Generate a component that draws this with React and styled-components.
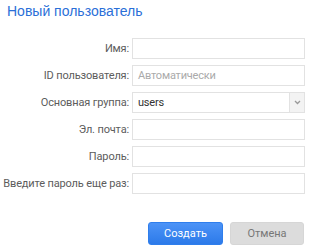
import React from "react";
import styled, { createGlobalStyle } from "styled-components";

const Global = createGlobalStyle`
  body {
    margin: 0;
    background: #fff;
    font-family: Roboto, "Liberation Sans", Arial, sans-serif;
  }
`;

const Dialog = styled.div`
  width: 312px;
  height: 252px;
  box-sizing: border-box;
  padding: 2px 7px 0 3px;
`;

const Title = styled.h1`
  margin: 0 0 0 4px;
  font-family: "Liberation Sans", Arial, sans-serif;
  font-size: 14px;
  font-weight: normal;
  color: #2a6fd8;
  line-height: 18px;
`;

const Form = styled.div`
  display: grid;
  grid-template-columns: 126px 173px;
  column-gap: 3px;
  row-gap: 6px;
  align-items: center;
  margin-top: 18px;
`;

const Label = styled.label`
  text-align: right;
  font-size: 11px;
  letter-spacing: -0.15px;
  color: #5c5c5c;
  white-space: nowrap;
`;

const Field = styled.div`
  height: 21px;
  box-sizing: border-box;
  border: 1px solid #e2e2e2;
  background: #fff;
  display: flex;
  align-items: center;
  padding-left: 5px;
  font-size: 11px;
  letter-spacing: -0.2px;
  color: ${(p) => (p.$placeholder ? "#aaa" : "#333")};
  position: relative;
`;

const Arrow = styled.div`
  position: absolute;
  right: 0;
  top: 0;
  bottom: 0;
  width: 14px;
  border-left: 1px solid #e2e2e2;
  background: #f3f3f3;
  display: flex;
  align-items: center;
  justify-content: center;
`;

const Buttons = styled.div`
  display: flex;
  justify-content: flex-end;
  gap: 7px;
  margin-top: 28px;
  padding-right: 1px;
`;

const Button = styled.button`
  width: ${(p) => p.$w}px;
  height: 23px;
  border-radius: 3px;
  font-family: inherit;
  font-size: 11px;
  cursor: pointer;
  border: 1px solid ${(p) => (p.$primary ? "#2f7eec" : "#d6d6d6")};
  background: ${(p) =>
    p.$primary ? "linear-gradient(#4c93f7, #2c7ae9)" : "#dcdcdc"};
  color: ${(p) => (p.$primary ? "#fff" : "#777")};
`;

const rows = [
  { label: "Имя:" },
  { label: "ID пользователя:", value: "Автоматически", placeholder: true },
  { label: "Основная группа:", value: "users", select: true },
  { label: "Эл. почта:" },
  { label: "Пароль:" },
  { label: "Введите пароль еще раз:" },
];

export default function App() {
  return (
    <Dialog>
      <Global />
      <Title>Новый пользователь</Title>
      <Form>
        {rows.map((r) => (
          <React.Fragment key={r.label}>
            <Label>{r.label}</Label>
            <Field $placeholder={r.placeholder}>
              {r.value}
              {r.select && (
                <Arrow>
                  <svg width="7" height="5" viewBox="0 0 7 5">
                    <path d="M1 1 L3.5 3.5 L6 1" fill="none" stroke="#999" strokeWidth="1.3" />
                  </svg>
                </Arrow>
              )}
            </Field>
          </React.Fragment>
        ))}
      </Form>
      <Buttons>
        <Button $primary $w={75}>Создать</Button>
        <Button $w={74}>Отмена</Button>
      </Buttons>
    </Dialog>
  );
}
